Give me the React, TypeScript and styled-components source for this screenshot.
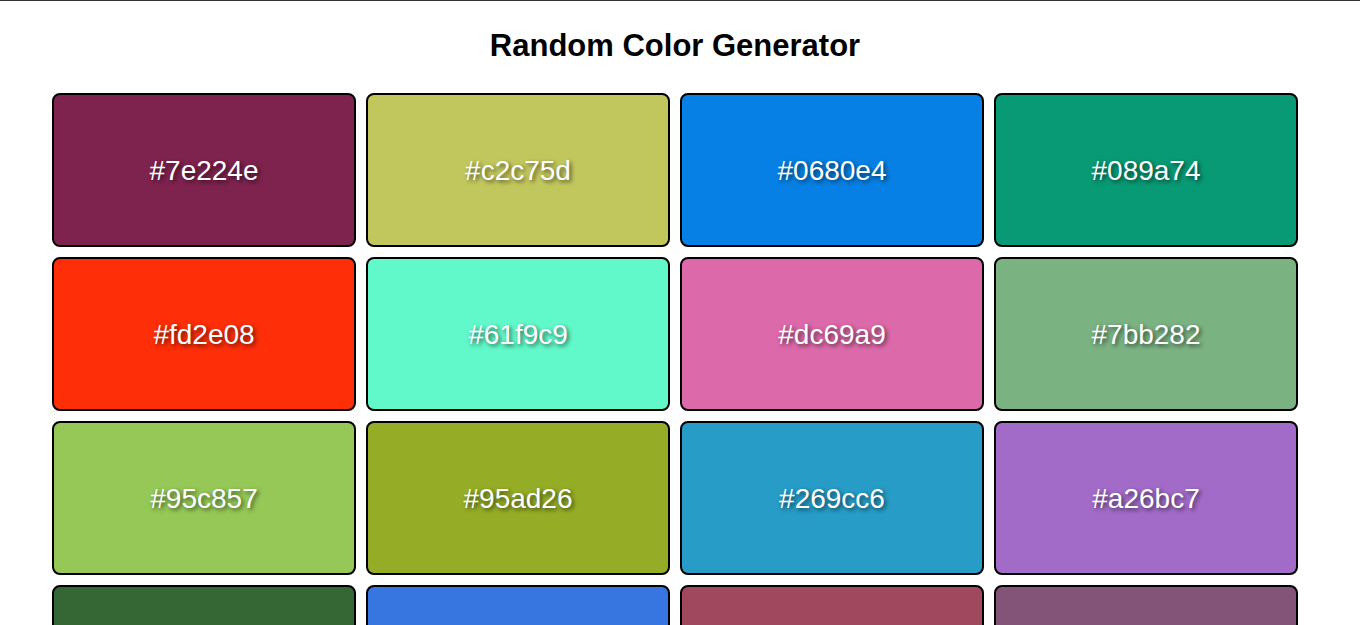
import {FC} from 'react';
import styled, {createGlobalStyle} from 'styled-components';

const colors = [
	'#7e224e', '#c2c75d', '#0680e4', '#089a74',
	'#fd2e08', '#61f9c9', '#dc69a9', '#7bb282',
	'#95c857', '#95ad26', '#269cc6', '#a26bc7',
	'#356735', '#3776e0', '#a0495e', '#835478',
	'#e0a43b', '#2d4f8e', '#b83a2f', '#5fc1a0',
	'#8d6e2a', '#c04fd3', '#41a85c', '#f07c9b',
	'#1f7f8f', '#d9c23e', '#6a3fb5', '#9bbd4a',
	'#e2573c', '#3f8fd2', '#7c2f6b', '#58b39a',
	'#c98a2e', '#4a6e3b', '#d14c84', '#2f9e57',
	'#8a5bd6', '#b7a045', '#346db0', '#a83e3e',
];

const GlobalStyle = createGlobalStyle`
	body {
		margin: 0;
		border-top: 1px solid #333;
		background: #fff;
		font-family: 'Comic Sans MS', 'Liberation Sans', sans-serif;
	}
`;

const Page = styled.div`
	padding: 0 62px 20px 52px;
`;

const Title = styled.h1`
	margin: 25px 0 27px;
	font-size: 31px;
	line-height: 40px;
	font-weight: bold;
	text-align: center;
	color: #000;
`;

const Grid = styled.div`
	display: grid;
	grid-template-columns: repeat(4, 1fr);
	gap: 10px;
`;

const ColorBox = styled.div<{$bg: string}>`
	display: flex;
	align-items: center;
	justify-content: center;
	height: 154px;
	box-sizing: border-box;
	border: 2px solid #000;
	border-radius: 8px;
	background-color: ${({$bg}) => $bg};
	color: #fff;
	font-size: 28px;
	padding-top: 2px;
	text-shadow: 2px 2px 4px rgba(0, 0, 0, 0.6);
	cursor: pointer;
`;

const App: FC = () => {
	return (
		<>
			<GlobalStyle />
			<Page>
				<Title>Random Color Generator</Title>
				<Grid>
					{colors.map((color) => (
						<ColorBox key={color} $bg={color}>
							{color}
						</ColorBox>
					))}
				</Grid>
			</Page>
		</>
	);
};

export default App;
